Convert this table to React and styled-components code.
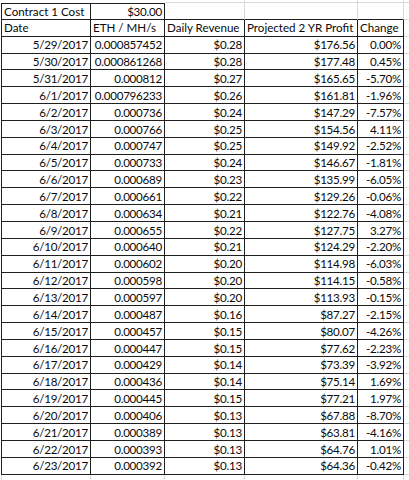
import React from 'react'
import styled, { createGlobalStyle } from 'styled-components'

const GlobalStyle = createGlobalStyle`
  html, body {
    margin: 0;
    padding: 0;
    background: #fff;
  }
  body {
    font-family: Lato, "Liberation Sans", sans-serif;
  }
`;

const DARK = '#1f1f1f';
const LIGHT = '#d8d8d8';

const Sheet = styled.div`
  display: grid;
  grid-template-columns: 90px 74px 80px 113px 46px 6px;
  grid-template-rows: 3px repeat(28, 16.85px) 6px;
  width: 409px;
  height: 480px;
  overflow: hidden;
  padding-left: 1px;
  box-sizing: border-box;
`;

const Cell = styled.div`
  box-sizing: border-box;
  border-top: ${p => (p.$t ? `1px solid ${p.$t}` : 'none')};
  border-right: 1px solid ${p => p.$r || 'transparent'};
  border-bottom: 1px solid ${p => p.$b || 'transparent'};
  border-left: ${p => (p.$l ? `1px solid ${p.$l}` : 'none')};
  display: flex;
  align-items: center;
  justify-content: ${p => (p.$align === 'left' ? 'flex-start' : 'flex-end')};
  padding: 1px 2px 0 2px;
  font-size: 11.6px;
  letter-spacing: ${p => (p.$align === 'left' ? '0' : '-0.25px')};
  color: #0a0a0a;
  white-space: nowrap;
  overflow: hidden;
  line-height: 1;
`;

const rows = [
  ['5/29/2017', '0.000857452', '$0.28', '$176.56', '0.00%'],
  ['5/30/2017', '0.000861268', '$0.28', '$177.48', '0.45%'],
  ['5/31/2017', '0.000812', '$0.27', '$165.65', '-5.70%'],
  ['6/1/2017', '0.000796233', '$0.26', '$161.81', '-1.96%'],
  ['6/2/2017', '0.000736', '$0.24', '$147.29', '-7.57%'],
  ['6/3/2017', '0.000766', '$0.25', '$154.56', '4.11%'],
  ['6/4/2017', '0.000747', '$0.25', '$149.92', '-2.52%'],
  ['6/5/2017', '0.000733', '$0.24', '$146.67', '-1.81%'],
  ['6/6/2017', '0.000689', '$0.23', '$135.99', '-6.05%'],
  ['6/7/2017', '0.000661', '$0.22', '$129.26', '-0.06%'],
  ['6/8/2017', '0.000634', '$0.21', '$122.76', '-4.08%'],
  ['6/9/2017', '0.000655', '$0.22', '$127.75', '3.27%'],
  ['6/10/2017', '0.000640', '$0.21', '$124.29', '-2.20%'],
  ['6/11/2017', '0.000602', '$0.20', '$114.98', '-6.03%'],
  ['6/12/2017', '0.000598', '$0.20', '$114.15', '-0.58%'],
  ['6/13/2017', '0.000597', '$0.20', '$113.93', '-0.15%'],
  ['6/14/2017', '0.000487', '$0.16', '$87.27', '-2.15%'],
  ['6/15/2017', '0.000457', '$0.15', '$80.07', '-4.26%'],
  ['6/16/2017', '0.000447', '$0.15', '$77.62', '-2.23%'],
  ['6/17/2017', '0.000429', '$0.14', '$73.39', '-3.92%'],
  ['6/18/2017', '0.000436', '$0.14', '$75.14', '1.69%'],
  ['6/19/2017', '0.000445', '$0.15', '$77.21', '1.97%'],
  ['6/20/2017', '0.000406', '$0.13', '$67.88', '-8.70%'],
  ['6/21/2017', '0.000389', '$0.13', '$63.81', '-4.16%'],
  ['6/22/2017', '0.000393', '$0.13', '$64.76', '1.01%'],
  ['6/23/2017', '0.000392', '$0.13', '$64.36', '-0.42%'],
];

const headers = ['Date', 'ETH / MH/s', 'Daily Revenue', 'Projected 2 YR Profit', 'Change'];

export default function App() {
  return (
    <>
      <GlobalStyle />
      <Sheet>
        {/* partial row above the table */}
        <Cell />
        <Cell />
        <Cell $r={LIGHT} $b={LIGHT} />
        <Cell $r={LIGHT} $b={LIGHT} />
        <Cell $r={LIGHT} $b={LIGHT} />
        <Cell $b={LIGHT} />

        {/* contract cost row */}
        <Cell $t={DARK} $l={DARK} $r={DARK} $b={DARK} $align="left">Contract 1 Cost</Cell>
        <Cell $t={DARK} $r={DARK} $b={DARK}>$30.00</Cell>
        <Cell $r={LIGHT} $b={DARK} />
        <Cell $r={LIGHT} $b={DARK} />
        <Cell $r={LIGHT} $b={DARK} />
        <Cell $b={LIGHT} />

        {headers.map((h, i) => (
          <Cell key={h} $l={i === 0 ? DARK : null} $r={DARK} $b={DARK} $align="left">{h}</Cell>
        ))}
        <Cell $b={LIGHT} />

        {rows.map(r => (
          <React.Fragment key={r[0]}>
            {r.map((v, i) => (
              <Cell key={i} $l={i === 0 ? DARK : null} $r={DARK} $b={DARK}>{v}</Cell>
            ))}
            <Cell $b={LIGHT} />
          </React.Fragment>
        ))}

        {/* empty row below */}
        <Cell $l={LIGHT} $r={LIGHT} />
        <Cell $r={LIGHT} />
        <Cell $r={LIGHT} />
        <Cell $r={LIGHT} />
        <Cell $r={LIGHT} />
        <Cell />
      </Sheet>
    </>
  )
}
